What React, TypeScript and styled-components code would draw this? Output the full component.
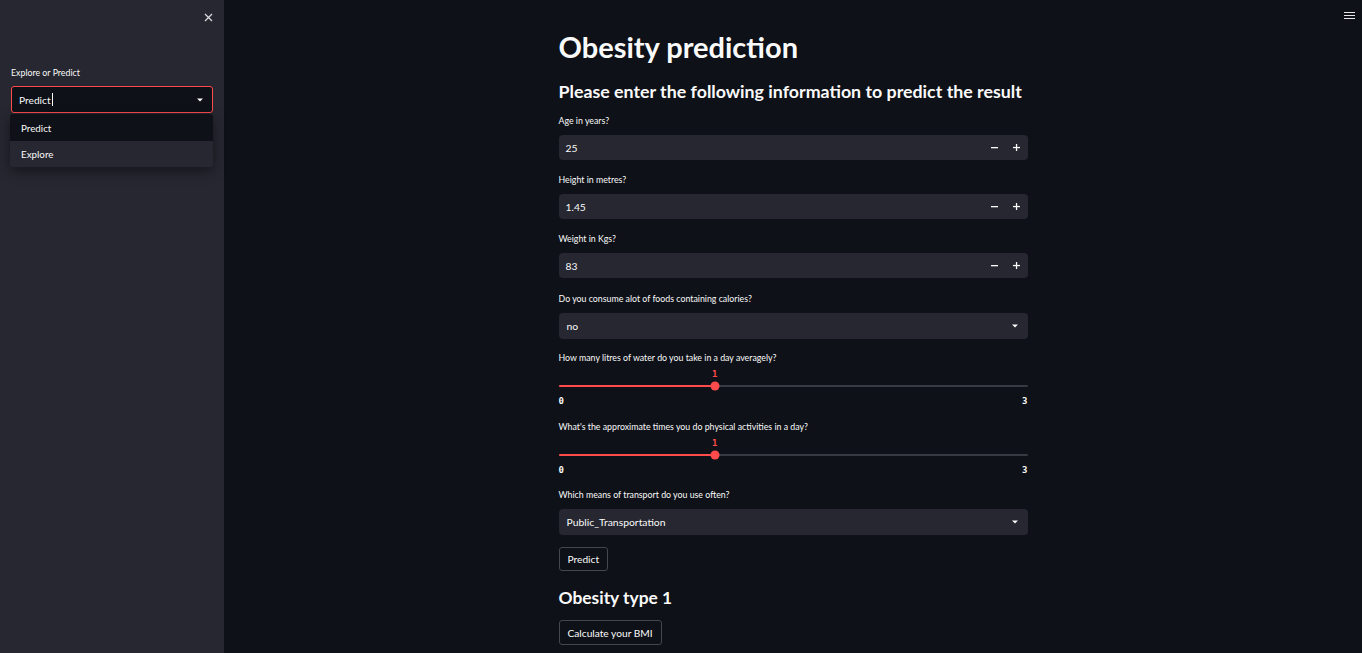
import React from "react";
import styled, { createGlobalStyle } from "styled-components";

const GlobalStyle = createGlobalStyle`
  html, body { margin: 0; padding: 0; background: #0e1117; }
  body { font-family: Lato, "Noto Sans", sans-serif; color: #fafafa; }
  * { box-sizing: border-box; }
`;

const Page = styled.div`
  display: grid;
  grid-template-columns: 224px 1fr;
  height: 653px;
  overflow: hidden;
`;

const Sidebar = styled.aside`
  background: #262730;
  display: flex;
  flex-direction: column;
  padding: 12px 11px 0 11px;
`;

const SideHeader = styled.div`
  display: flex;
  justify-content: flex-end;
  height: 10px;
`;

const CloseButton = styled.button`
  width: 10px;
  height: 10px;
  padding: 0;
  border: none;
  background: none;
  display: flex;
  align-items: center;
  justify-content: center;
  color: #d8d8dc;
`;

const SideLabel = styled.div`
  margin-top: 44px;
  font-size: 8.8px;
  line-height: 14px;
  color: #fafafa;
`;

const SelectWrap = styled.div`
  position: relative;
  margin-top: 6px;
`;

const ActiveSelect = styled.div`
  height: 27px;
  border: 1px solid #ff4b4b;
  border-radius: 3px;
  background: #0e1117;
  display: flex;
  align-items: center;
  padding: 0 9px 0 7px;
  font-size: 10.2px;
  color: #fafafa;
`;

const Cursor = styled.span`
  display: inline-block;
  width: 1px;
  height: 13px;
  background: #fafafa;
  margin-left: 1px;
`;

const Grow = styled.div`
  flex: 1;
  display: flex;
  align-items: center;
`;

const Menu = styled.ul`
  position: absolute;
  left: -1px;
  right: 0;
  top: 28px;
  margin: 0;
  padding: 0;
  list-style: none;
  background: #262730;
  border-radius: 3px;
  overflow: hidden;
  box-shadow: 0 4px 14px rgba(0, 0, 0, 0.45);
`;

const MenuItem = styled.li<{ $active?: boolean }>`
  height: ${(p) => (p.$active ? 27 : 26)}px;
  display: flex;
  align-items: center;
  padding-left: 11px;
  font-size: 9.8px;
  color: #fafafa;
  background: ${(p) => (p.$active ? "#0e1117" : "#262730")};
`;

const Main = styled.main`
  position: relative;
  display: flex;
  justify-content: center;
  padding-top: 30px;
`;

const TopBar = styled.div`
  position: absolute;
  top: 12px;
  right: 7px;
`;

const MenuIcon = styled.button`
  width: 11px;
  padding: 0;
  border: none;
  background: none;
  display: flex;
  flex-direction: column;
  gap: 2px;
`;

const MenuBar = styled.span`
  display: block;
  height: 1px;
  width: 11px;
  background: #e6e6e9;
`;

const Content = styled.div`
  width: 469px;
  display: flex;
  flex-direction: column;
`;

const Title = styled.h1`
  margin: 0;
  font-size: 29px;
  line-height: 34px;
  font-weight: 700;
  white-space: nowrap;
`;

const Subtitle = styled.h2<{ $mt: number; $size: number }>`
  margin: ${(p) => p.$mt}px 0 0 0;
  font-size: ${(p) => p.$size}px;
  line-height: 26px;
  font-weight: 700;
  white-space: nowrap;
`;

const Widget = styled.div<{ $mt: number }>`
  display: flex;
  flex-direction: column;
  margin-top: ${(p) => p.$mt}px;
`;

const Label = styled.label`
  font-size: 8.8px;
  line-height: 14px;
  color: #fafafa;
  margin-bottom: 7px;
  white-space: nowrap;
`;

const NumberBox = styled.div`
  height: 25px;
  background: #262730;
  border-radius: 4px;
  display: flex;
  align-items: center;
`;

const NumberValue = styled.div`
  flex: 1;
  padding-left: 7px;
  font-size: 10.3px;
  color: #fafafa;
`;

const StepButton = styled.button`
  width: 22px;
  height: 25px;
  border: none;
  background: none;
  padding: 0;
  display: flex;
  align-items: center;
  justify-content: center;
`;

const SelectBox = styled.div`
  height: 26px;
  background: #262730;
  border-radius: 4px;
  display: flex;
  align-items: center;
  padding: 0 10px 0 8px;
  font-size: 10.4px;
  color: #fafafa;
`;

const SliderValue = styled.div`
  position: relative;
  height: 12px;
  margin-top: -4px;
`;

const ThumbValue = styled.span`
  position: absolute;
  top: 0;
  transform: translateX(-50%);
  font-family: "DejaVu Sans Mono", "Liberation Mono", monospace;
  font-size: 9px;
  font-weight: 700;
  line-height: 12px;
  color: #ff4b4b;
`;

const Track = styled.div`
  position: relative;
  height: 2px;
  margin: 5px 0 4px 0;
  background: #383a43;
  border-radius: 1px;
`;

const TrackFill = styled.div`
  height: 2px;
  background: #ff4b4b;
  border-radius: 1px;
`;

const Thumb = styled.div`
  position: absolute;
  top: 50%;
  width: 9px;
  height: 9px;
  border-radius: 50%;
  background: #ff4b4b;
  transform: translate(-50%, -50%);
`;

const Ticks = styled.div`
  display: flex;
  justify-content: space-between;
  font-family: "DejaVu Sans Mono", "Liberation Mono", monospace;
  font-size: 9px;
  font-weight: 700;
  line-height: 12px;
  color: #fafafa;
  margin-top: 4px;
`;

const Button = styled.button<{ $mt: number; $h: number }>`
  align-self: flex-start;
  margin-top: ${(p) => p.$mt}px;
  height: ${(p) => p.$h}px;
  padding: 0 8px;
  background: #0e1117;
  border: 1px solid #45464e;
  border-radius: 3px;
  color: #fafafa;
  font-family: Lato, "Noto Sans", sans-serif;
  font-size: 10.2px;
`;

const Caret = () => (
  <svg width="6" height="4" viewBox="0 0 6 4">
    <path d="M0 0.5h6L3 3.5z" fill="#fafafa" />
  </svg>
);

const Minus = () => (
  <svg width="7" height="7" viewBox="0 0 7 7">
    <rect x="0" y="3" width="7" height="1.3" fill="#fafafa" />
  </svg>
);

const Plus = () => (
  <svg width="7" height="7" viewBox="0 0 7 7">
    <rect x="0" y="2.9" width="7" height="1.3" fill="#fafafa" />
    <rect x="2.9" y="0" width="1.3" height="7" fill="#fafafa" />
  </svg>
);

const NumberInput = ({ label, value, mt }: { label: string; value: string; mt: number }) => (
  <Widget $mt={mt}>
    <Label>{label}</Label>
    <NumberBox>
      <NumberValue>{value}</NumberValue>
      <StepButton><Minus /></StepButton>
      <StepButton><Plus /></StepButton>
    </NumberBox>
  </Widget>
);

const Select = ({ label, value, mt }: { label: string; value: string; mt: number }) => (
  <Widget $mt={mt}>
    <Label>{label}</Label>
    <SelectBox>
      <Grow>{value}</Grow>
      <Caret />
    </SelectBox>
  </Widget>
);

const Slider = ({ label, value, min, max, mt }: { label: string; value: number; min: number; max: number; mt: number }) => {
  const pct = ((value - min) / (max - min)) * 100;
  return (
    <Widget $mt={mt}>
      <Label>{label}</Label>
      <SliderValue>
        <ThumbValue style={{ left: `${pct}%` }}>{value}</ThumbValue>
      </SliderValue>
      <Track>
        <TrackFill style={{ width: `${pct}%` }} />
        <Thumb style={{ left: `${pct}%` }} />
      </Track>
      <Ticks>
        <span>{min}</span>
        <span>{max}</span>
      </Ticks>
    </Widget>
  );
};

export default function App() {
  return (
    <>
      <GlobalStyle />
      <Page>
        <Sidebar>
          <SideHeader>
            <CloseButton>
              <svg width="9" height="9" viewBox="0 0 9 9">
                <path d="M1 1l7 7M8 1L1 8" stroke="#d8d8dc" strokeWidth="1.3" />
              </svg>
            </CloseButton>
          </SideHeader>
          <SideLabel>Explore or Predict</SideLabel>
          <SelectWrap>
            <ActiveSelect>
              <Grow>
                Predict
                <Cursor />
              </Grow>
              <Caret />
            </ActiveSelect>
            <Menu>
              <MenuItem $active>Predict</MenuItem>
              <MenuItem>Explore</MenuItem>
            </Menu>
          </SelectWrap>
        </Sidebar>
        <Main>
          <TopBar>
            <MenuIcon>
              <MenuBar />
              <MenuBar />
              <MenuBar />
            </MenuIcon>
          </TopBar>
          <Content>
            <Title>Obesity prediction</Title>
            <Subtitle $mt={14} $size={17.8}>Please enter the following information to predict the result</Subtitle>
            <NumberInput mt={10} label="Age in years?" value="25" />
            <NumberInput mt={13} label="Height in metres?" value="1.45" />
            <NumberInput mt={13} label="Weight in Kgs?" value="83" />
            <Select mt={14} label="Do you consume alot of foods containing calories?" value="no" />
            <Slider mt={12} label="How many litres of water do you take in a day averagely?" value={1} min={0} max={3} />
            <Slider mt={13} label="What's the approximate times you do physical activities in a day?" value={1} min={0} max={3} />
            <Select mt={12} label="Which means of transport do you use often?" value="Public_Transportation" />
            <Button $mt={12} $h={24}>Predict</Button>
            <Subtitle $mt={14} $size={17.4}>Obesity type 1</Subtitle>
            <Button $mt={9} $h={25}>Calculate your BMI</Button>
          </Content>
        </Main>
      </Page>
    </>
  );
}
